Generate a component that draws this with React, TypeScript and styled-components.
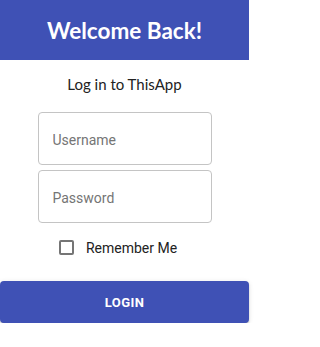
import React from "react";
import styled, { createGlobalStyle } from "styled-components";

const Global = createGlobalStyle`
  html, body { margin: 0; padding: 0; background: #fff; }
  * { box-sizing: border-box; }
`;

const Page = styled.div`
  width: 249px;
  display: flex;
  flex-direction: column;
  align-items: center;
`;

const Header = styled.header`
  width: 100%;
  height: 60px;
  background: #3f51b5;
  display: flex;
  align-items: center;
  justify-content: center;
`;

const Title = styled.h1`
  margin: 0;
  color: #fff;
  font-family: Lato, "Noto Sans", sans-serif;
  font-weight: 700;
  font-size: 22.5px;
`;

const Subtitle = styled.p`
  margin: 15px 0 0;
  height: 19px;
  line-height: 19px;
  color: #222;
  font-family: Lato, "Noto Sans", sans-serif;
  font-size: 15px;
`;

const Form = styled.form`
  display: flex;
  flex-direction: column;
  align-items: center;
  gap: 5px;
  margin-top: 18px;
  width: 100%;
`;

const Field = styled.input`
  width: 174px;
  height: 53px;
  border: 1px solid #c4c4c4;
  border-radius: 4px;
  padding: 2px 14px 0;
  font-family: Roboto, "Liberation Sans", sans-serif;
  font-size: 14px;
  color: #222;
  outline: none;
  &::placeholder { color: #757575; }
`;

const CheckRow = styled.label`
  display: flex;
  align-items: center;
  gap: 12px;
  height: 17px;
  margin: 11px 13px 0 0;
  font-family: Roboto, "Liberation Sans", sans-serif;
  font-size: 14px;
  color: #222;
`;

const Box = styled.span`
  width: 15px;
  height: 15px;
  border: 2px solid #757575;
  border-radius: 2px;
`;

const Button = styled.button`
  width: 249px;
  height: 42px;
  margin-top: 20px;
  border: none;
  border-radius: 4px;
  background: #3f51b5;
  color: #fff;
  font-family: Roboto, "Liberation Sans", sans-serif;
  font-weight: 700;
  font-size: 13px;
  letter-spacing: 0.4px;
  box-shadow: 0 3px 1px -2px rgba(0,0,0,0.2), 0 2px 2px 0 rgba(0,0,0,0.14), 0 1px 5px 0 rgba(0,0,0,0.12);
`;

export default function App() {
  return (
    <Page>
      <Global />
      <Header>
        <Title>Welcome Back!</Title>
      </Header>
      <Subtitle>Log in to ThisApp</Subtitle>
      <Form onSubmit={(e) => e.preventDefault()}>
        <Field placeholder="Username" />
        <Field placeholder="Password" type="password" />
        <CheckRow>
          <Box />
          Remember Me
        </CheckRow>
        <Button type="submit">LOGIN</Button>
      </Form>
    </Page>
  );
}
